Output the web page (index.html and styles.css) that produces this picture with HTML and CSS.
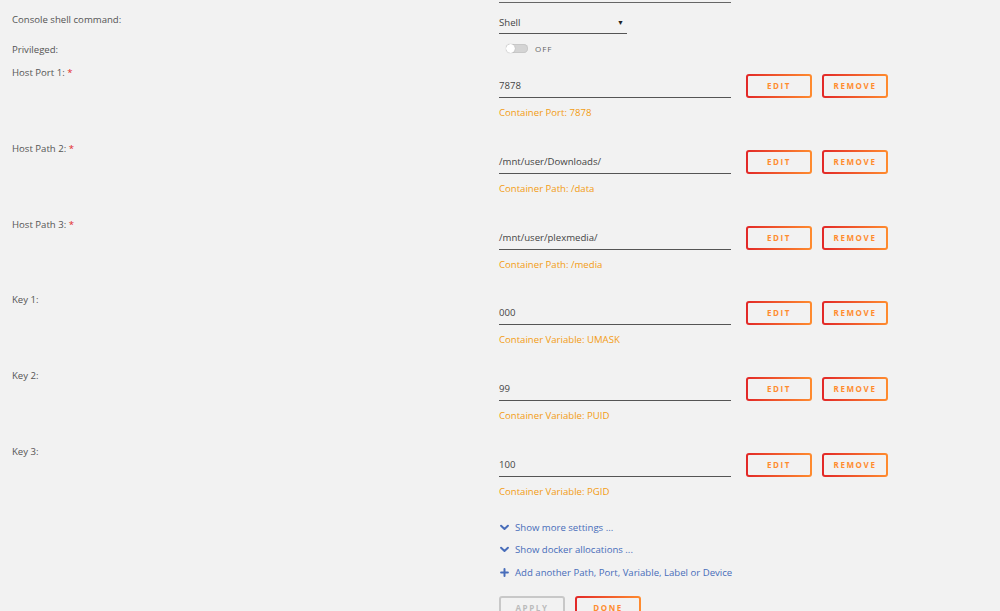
FILE: index.html
```html
<!DOCTYPE html>
<html>
<head>
<meta charset="utf-8">
<link rel="stylesheet" href="styles.css">
</head>
<body>
<div class="form">
  <div class="row prev">
    <div class="label"></div>
    <div class="field"><div class="line wide"></div></div>
  </div>

  <div class="row console">
    <div class="label">Console shell command:</div>
    <div class="field">
      <div class="select"><span>Shell</span><span class="caret">&#9660;</span></div>
    </div>
  </div>

  <div class="row priv">
    <div class="label">Privileged:</div>
    <div class="field">
      <div class="switch"><span class="track"><span class="knob"></span></span><span class="off">OFF</span></div>
    </div>
  </div>

  <div class="row cfg">
    <div class="label">Host Port 1: <span class="req">*</span></div>
    <div class="field">
      <div class="entry">
        <div class="input">7878</div>
        <button class="btn">EDIT</button>
        <button class="btn">REMOVE</button>
      </div>
      <div class="desc">Container Port: 7878</div>
    </div>
  </div>

  <div class="row cfg">
    <div class="label">Host Path 2: <span class="req">*</span></div>
    <div class="field">
      <div class="entry">
        <div class="input">/mnt/user/Downloads/</div>
        <button class="btn">EDIT</button>
        <button class="btn">REMOVE</button>
      </div>
      <div class="desc">Container Path: /data</div>
    </div>
  </div>

  <div class="row cfg">
    <div class="label">Host Path 3: <span class="req">*</span></div>
    <div class="field">
      <div class="entry">
        <div class="input">/mnt/user/plexmedia/</div>
        <button class="btn">EDIT</button>
        <button class="btn">REMOVE</button>
      </div>
      <div class="desc">Container Path: /media</div>
    </div>
  </div>

  <div class="row cfg">
    <div class="label">Key 1:</div>
    <div class="field">
      <div class="entry">
        <div class="input">000</div>
        <button class="btn">EDIT</button>
        <button class="btn">REMOVE</button>
      </div>
      <div class="desc">Container Variable: UMASK</div>
    </div>
  </div>

  <div class="row cfg">
    <div class="label">Key 2:</div>
    <div class="field">
      <div class="entry">
        <div class="input">99</div>
        <button class="btn">EDIT</button>
        <button class="btn">REMOVE</button>
      </div>
      <div class="desc">Container Variable: PUID</div>
    </div>
  </div>

  <div class="row cfg">
    <div class="label">Key 3:</div>
    <div class="field">
      <div class="entry">
        <div class="input">100</div>
        <button class="btn">EDIT</button>
        <button class="btn">REMOVE</button>
      </div>
      <div class="desc">Container Variable: PGID</div>
    </div>
  </div>

  <div class="row links">
    <div class="label"></div>
    <div class="field">
      <div class="link"><svg class="ico" viewBox="0 0 10 10"><path d="M1.2 3 L5 6.6 L8.8 3" fill="none" stroke="#486dba" stroke-width="2.2" stroke-linecap="round" stroke-linejoin="round"/></svg>Show more settings ...</div>
      <div class="link"><svg class="ico" viewBox="0 0 10 10"><path d="M1.2 3 L5 6.6 L8.8 3" fill="none" stroke="#486dba" stroke-width="2.2" stroke-linecap="round" stroke-linejoin="round"/></svg>Show docker allocations ...</div>
      <div class="link"><svg class="ico" viewBox="0 0 10 10"><path d="M5 1.2 V8.8 M1.2 5 H8.8" fill="none" stroke="#486dba" stroke-width="2.2" stroke-linecap="round"/></svg>Add another Path, Port, Variable, Label or Device</div>
      <div class="actions">
        <button class="btn apply">APPLY</button>
        <button class="btn">DONE</button>
      </div>
    </div>
  </div>
</div>
</body>
</html>
```

FILE: styles.css
```css
html, body {
  margin: 0;
  padding: 0;
  background: #f2f2f2;
  overflow: hidden;
}
body {
  font-family: "Open Sans", "Noto Sans", sans-serif;
  font-size: 9.6px;
  color: #555;
}
.form {
  display: flex;
  flex-direction: column;
}
.row {
  display: grid;
  grid-template-columns: 499px 1fr;
}
.label {
  padding-left: 12px;
  line-height: 14px;
  color: #555;
}
.req {
  color: #e22828;
}
.prev {
  height: 3px;
}
.line.wide {
  width: 232px;
  height: 2px;
  border-bottom: 1px solid #666;
}
.console {
  margin-top: 7px;
}
.console .label {
  padding-top: 3px;
}
.select {
  width: 128px;
  height: 24px;
  padding-top: 1px;
  box-sizing: border-box;
  border-bottom: 1px solid #555;
  display: flex;
  align-items: center;
  justify-content: space-between;
  color: #444;
}
.caret {
  font-size: 7px;
  color: #222;
  margin-right: 3px;
}
.priv {
  height: 31px;
}
.priv .label {
  padding-top: 9px;
}
.switch {
  display: flex;
  align-items: center;
  margin-top: 9px;
  margin-left: 7px;
}
.track {
  width: 22px;
  height: 9px;
  border-radius: 5px;
  background: #d4d4d4;
  position: relative;
  box-shadow: inset 0 0 0 1px #c8c8c8;
}
.knob {
  position: absolute;
  left: 0;
  top: 0;
  width: 9px;
  height: 9px;
  border-radius: 50%;
  background: #fff;
  box-shadow: 0 0 1px rgba(0,0,0,0.35);
}
.off {
  margin-left: 7px;
  font-size: 8px;
  letter-spacing: 1px;
  color: #666;
}
.cfg {
  height: 75.8px;
}
.cfg .label {
  padding-top: 1px;
}
.entry {
  display: flex;
  align-items: flex-start;
  margin-top: 9px;
}
.input {
  width: 232px;
  height: 23px;
  line-height: 23px;
  border-bottom: 1px solid #555;
  color: #444;
}
.btn {
  box-sizing: border-box;
  width: 66px;
  height: 24px;
  margin: 0 0 0 15px;
  padding: 0;
  border: 2px solid transparent;
  border-radius: 3px;
  background:
    linear-gradient(#f2f2f2, #f2f2f2) padding-box,
    linear-gradient(90deg, #e22828, #ff8c2f) border-box;
  color: #ff8c2f;
  font-family: "Open Sans", "Noto Sans", sans-serif;
  font-size: 8px;
  font-weight: 700;
  letter-spacing: 1.6px;
  text-align: center;
  line-height: 20px;
}
.btn + .btn {
  margin-left: 10px;
}
.desc {
  margin-top: 8px;
  line-height: 14px;
  color: #f29c12;
}
.links .field {
  margin-top: -4px;
}
.link {
  display: flex;
  align-items: center;
  height: 22.5px;
  color: #486dba;
}
.ico {
  width: 9px;
  height: 9px;
  margin-left: 1px;
  margin-right: 6px;
}
.actions {
  display: flex;
  margin-top: 13px;
}
.actions .btn:first-child {
  margin-left: 0;
}
.btn.apply {
  background: #f2f2f2;
  border: 2px solid #c8c8c8;
  color: #bbb;
}
```
